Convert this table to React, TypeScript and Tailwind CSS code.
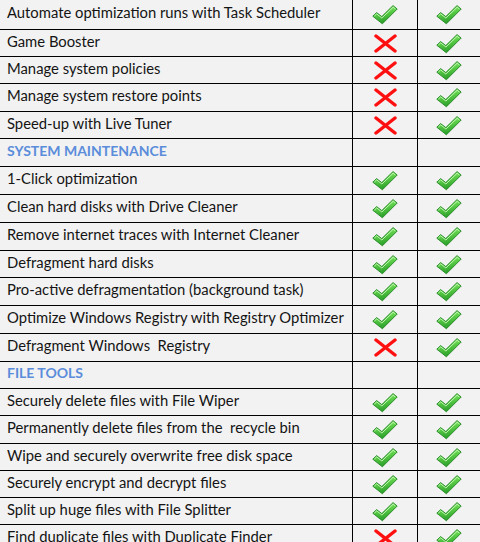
const rows: { label: string; h: string; section?: boolean; a?: boolean; b?: boolean }[] = [
  { label: "Automate optimization runs with Task Scheduler", h: "h-[30px]", a: true, b: true },
  { label: "Game Booster", h: "h-[27px]", a: false, b: true },
  { label: "Manage system policies", h: "h-[27px]", a: false, b: true },
  { label: "Manage system restore points", h: "h-[28px]", a: false, b: true },
  { label: "Speed-up with Live Tuner", h: "h-[27px]", a: false, b: true },
  { label: "SYSTEM MAINTENANCE", h: "h-[28px]", section: true },
  { label: "1-Click optimization", h: "h-[28px]", a: true, b: true },
  { label: "Clean hard disks with Drive Cleaner", h: "h-[28px]", a: true, b: true },
  { label: "Remove internet traces with Internet Cleaner", h: "h-[28px]", a: true, b: true },
  { label: "Defragment hard disks", h: "h-[27px]", a: true, b: true },
  { label: "Pro-active defragmentation (background task)", h: "h-[28px]", a: true, b: true },
  { label: "Optimize Windows Registry with Registry Optimizer", h: "h-[28px]", a: true, b: true },
  { label: "Defragment Windows  Registry", h: "h-[28px]", a: false, b: true },
  { label: "FILE TOOLS", h: "h-[27px]", section: true },
  { label: "Securely delete files with File Wiper", h: "h-[27px]", a: true, b: true },
  { label: "Permanently delete files from the  recycle bin", h: "h-[28px]", a: true, b: true },
  { label: "Wipe and securely overwrite free disk space", h: "h-[27px]", a: true, b: true },
  { label: "Securely encrypt and decrypt files", h: "h-[27px]", a: true, b: true },
  { label: "Split up huge files with File Splitter", h: "h-[27px]", a: true, b: true },
  { label: "Find duplicate files with Duplicate Finder", h: "h-[27px]", a: false, b: true },
];

function Check() {
  return (
    <svg width="26" height="21" viewBox="0 0 26 21">
      <defs>
        <linearGradient id="cg" x1="0" y1="0" x2="0.3" y2="1">
          <stop offset="0" stopColor="#b6f59a" />
          <stop offset="0.45" stopColor="#5fd24a" />
          <stop offset="1" stopColor="#2a9d2a" />
        </linearGradient>
      </defs>
      <path
        d="M0.8 12.2 L4.6 8.6 L9.8 12.6 L21 1.6 L25.2 5 L10.4 19.8 Z"
        fill="url(#cg)"
        stroke="#2f8f2f"
        strokeWidth="1"
        strokeLinejoin="round"
      />
      <path d="M2.4 12 L4.7 9.9 L9.9 14 L21.2 3.2 L23.4 5" fill="none" stroke="#d8ffc8" strokeWidth="1" opacity="0.8" />
    </svg>
  );
}

function Cross() {
  return (
    <svg width="23" height="19" viewBox="0 0 23 19">
      <path d="M2 2 L21 17 M21 2 L2 17" stroke="#ff1010" strokeWidth="3.4" strokeLinecap="round" />
    </svg>
  );
}

export default function App() {
  return (
    <div
      className="w-[480px] h-[542px] overflow-hidden bg-[#f2f2f2] text-[#141414]"
      style={{ fontFamily: "Lato, 'Open Sans', sans-serif" }}
    >
      {rows.map((r, i) => (
        <div key={i} className={`grid grid-cols-[353px_65px_62px] border-b border-black ${r.h}`}>
          <div className="flex items-center pl-[7px] pb-[5px] border-r border-black whitespace-pre">
            {r.section ? (
              <span className="text-[14px] font-bold text-[#5b8ddb]">{r.label}</span>
            ) : (
              <span className="text-[14.8px]">{r.label}</span>
            )}
          </div>
          <div className="flex items-center justify-center border-r border-black">
            {!r.section && (r.a ? <Check /> : <Cross />)}
          </div>
          <div className="flex items-center justify-center">
            {!r.section && (r.b ? <Check /> : <Cross />)}
          </div>
        </div>
      ))}
    </div>
  );
}
